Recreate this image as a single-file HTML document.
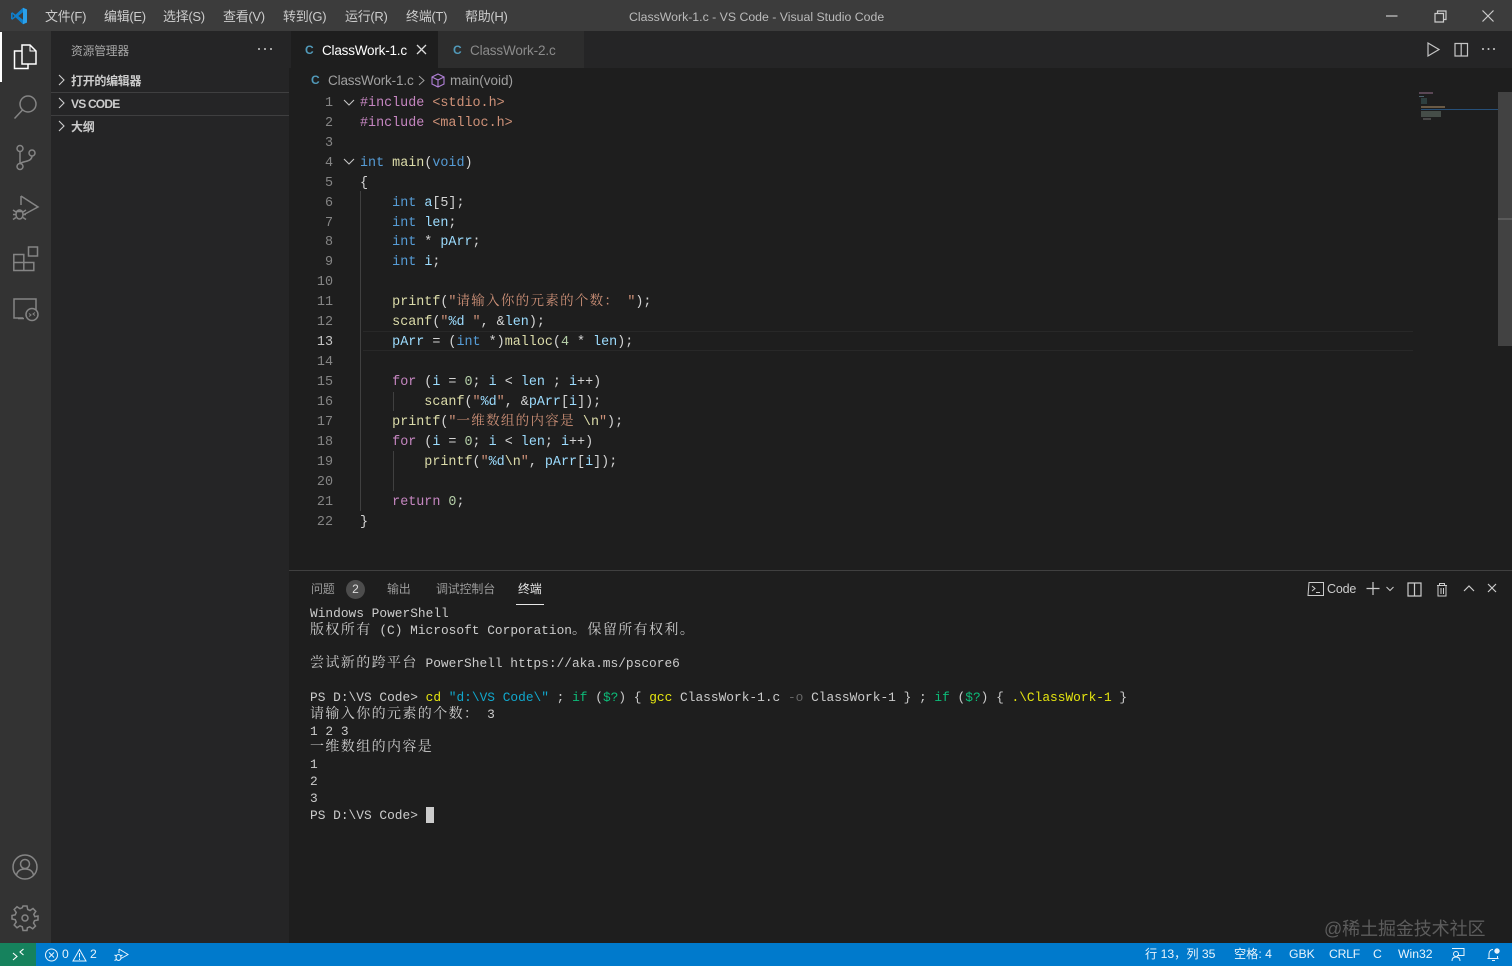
<!DOCTYPE html>
<html lang="zh"><head><meta charset="utf-8"><title>ClassWork-1.c - VS Code</title>
<style>
html,body{margin:0;padding:0;background:#1e1e1e}
#r{position:relative;width:1512px;height:966px;overflow:hidden;background:#1e1e1e;font-family:"Liberation Sans","Noto Sans CJK SC",sans-serif;color:#ccc}
.a{position:absolute;white-space:pre}
svg{position:absolute;overflow:visible;fill:none}
.m{font-size:13px;top:8px;line-height:18px;color:#ccc;letter-spacing:-.3px}
.n{left:300px;width:33px;text-align:right;font:13.4px/20px "Liberation Mono",monospace;color:#858585;margin-top:2px}
.l{left:360px;font:13.4px/20px "Liberation Mono","Noto Serif CJK SC",monospace;color:#d4d4d4;margin-top:2px}
.k{color:#569cd6}.p{color:#c586c0}.s{color:#ce9178}.f{color:#dcdcaa}.v{color:#9cdcfe}.g{color:#b5cea8}
.z{font-family:"Noto Serif CJK SC",serif;font-size:13.5px;letter-spacing:1.3px;line-height:0}
.t{left:310px;font:12.85px/17px "Liberation Mono","Noto Serif CJK SC",monospace;color:#ccc}
.z2{font-family:"Noto Serif CJK SC",serif;font-size:14px;letter-spacing:1.4px;line-height:0}
.y{color:#e5e510}.c{color:#11a8cd}.q{color:#0dbc79}.d{color:#666}
.b{font-size:12.2px;top:945px;line-height:18px;color:#e8f4fc}
.pt{font-size:12px;top:580px;line-height:18px;color:#9a9a9a;letter-spacing:-.2px}
.sh{font-size:12px;font-weight:bold;left:71px;line-height:16px;color:#ccc;letter-spacing:-.3px}
.ic{stroke:#858585;stroke-width:1.5}
</style></head><body><div id="r">

<!-- title bar -->
<div class="a" style="left:0;top:0;width:1512px;height:31px;background:#3c3c3c"></div>
<svg style="left:10px;top:7px" width="18" height="18" viewBox="0 0 18 18"><path d="M13 .8 5.600 7.600 2.400 5.200 1 6v6l1.400.8 3.200-2.400L13 17.200 17 15.500V2.500z" fill="#0f7fcb"/><path d="M13 5.300 8.300 9 13 12.700z" fill="#3c3c3c"/><path d="M2.600 7v4L4.500 9z" fill="#3c3c3c"/><path d="M13 .8 17 2.500v13L13 17.200z" fill="#2ba0ea"/></svg>
<div class="a m" style="left:45px">文件(F)</div>
<div class="a m" style="left:104px">编辑(E)</div>
<div class="a m" style="left:163px">选择(S)</div>
<div class="a m" style="left:223px">查看(V)</div>
<div class="a m" style="left:283px">转到(G)</div>
<div class="a m" style="left:345px">运行(R)</div>
<div class="a m" style="left:406px">终端(T)</div>
<div class="a m" style="left:465px">帮助(H)</div>
<div class="a" style="left:629px;top:8px;font-size:12.3px;line-height:18px;color:#bbb">ClassWork-1.c - VS Code - Visual Studio Code</div>
<svg style="left:1380px;top:8px" width="120" height="16" viewBox="0 0 120 16" stroke="#ccc" stroke-width="1.200"><path d="M6 8H17.500"/><path d="M55 5.500h8.500V14H55zM57.500 5.500V3H66v8.500H63.500"/><path d="M102.500 2.500 113.500 13.500M113.500 2.500 102.500 13.500"/></svg>

<!-- activity bar -->
<div class="a" style="left:0;top:31px;width:51px;height:912px;background:#333"></div>
<div class="a" style="left:0;top:32px;width:2px;height:50px;background:#fff"></div>
<svg style="left:13px;top:44px" width="24" height="26" viewBox="0 0 24 26" stroke="#fff" stroke-width="1.500"><path d="M9 1h8l6 6v13H9z"/><path d="M17 1v6h6" stroke-width="1"/><path d="M9 7H1.500v17.500H15V20"/></svg>
<svg style="left:13px;top:94px" width="25" height="26" viewBox="0 0 25 26" class="ic"><circle cx="15" cy="10" r="8"/><path d="M9.500 16 1.500 24.500"/></svg>
<svg style="left:14px;top:144px" width="24" height="27" viewBox="0 0 24 27" class="ic"><circle cx="6" cy="4.500" r="3"/><circle cx="6" cy="22.500" r="3"/><circle cx="18" cy="9" r="3"/><path d="M6 7.500v12M18 12c0 4-4 5-6.500 5.500S7 18.500 6 20"/></svg>
<svg style="left:12px;top:194px" width="27" height="28" viewBox="0 0 27 28" class="ic"><path d="M9 2 26 13 12 20.500M9 2v9"/><ellipse cx="7.500" cy="20.500" rx="3.500" ry="4.500"/><path d="M1 16l3 2M1 20.500h3M1 25.500l3-2M14 16l-3 2M14 20.500h-3M14 25.500l-3-2M4 17.500h7"/></svg>
<svg style="left:13px;top:246px" width="26" height="26" viewBox="0 0 26 26" class="ic"><path d="M.8 8.500h10v16H.8zM.8 16.500h20v8h-10M10.800 8.500v8"/><path d="M15.500 1h9v9h-9z"/></svg>
<svg style="left:13px;top:298px" width="26" height="26" viewBox="0 0 26 26" class="ic"><path d="M10 20H1V1h22v11M5 20.500h6"/><circle cx="19" cy="16.500" r="6"/><path d="M16 15.500l2 1.500-2 1.500M22 14.500l-2 1.500 2 1.500" stroke-width="1"/></svg>
<svg style="left:12px;top:854px" width="26" height="26" viewBox="0 0 26 26" class="ic"><circle cx="13" cy="13" r="12"/><circle cx="13" cy="10" r="4.500"/><path d="M4.500 21c1-4.500 4.500-6 8.500-6s7.500 1.500 8.500 6"/></svg>
<svg style="left:12px;top:905px" width="26" height="26" viewBox="0 0 26 26" class="ic"><path d="M11 1h4l.7 3.500 2.300 1 3-2 2.800 2.800-2 3 1 2.300L26 11v4l-3.500.7-1 2.300 2 3-2.800 2.800-3-2-2.300 1L15 25.500h-4l-.7-3.700-2.300-1-3 2L2.200 20l2-3-1-2.300L0 14v-3.500l3.200-.7 1-2.300-2-3L5 1.700l3 2 2.300-1z"/><circle cx="13" cy="13" r="3"/></svg>

<!-- sidebar -->
<div class="a" style="left:51px;top:31px;width:238px;height:912px;background:#252526"></div>
<div class="a" style="left:71px;top:43px;font-size:11.8px;line-height:16px;color:#a8a8a8;letter-spacing:-.2px">资源管理器</div>
<svg style="left:257px;top:46px" width="16" height="6"><circle cx="2" cy="3" r="1" fill="#ccc"/><circle cx="8" cy="3" r="1" fill="#ccc"/><circle cx="14" cy="3" r="1" fill="#ccc"/></svg>
<svg style="left:56px;top:72px" width="12" height="64" stroke="#ccc" stroke-width="1.100"><path d="M3 3l5 5-5 5M3 26l5 5-5 5M3 49l5 5-5 5"/></svg>
<div class="a sh" style="top:73px">打开的编辑器</div>
<div class="a" style="left:51px;top:92px;width:238px;height:1px;background:#3f3f40"></div>
<div class="a sh" style="top:96px;letter-spacing:-.8px">VS CODE</div>
<div class="a" style="left:51px;top:115px;width:238px;height:1px;background:#3f3f40"></div>
<div class="a sh" style="top:119px">大纲</div>

<!-- tabs -->
<div class="a" style="left:289px;top:31px;width:1223px;height:37px;background:#252526"></div>
<div class="a" style="left:291px;top:31px;width:147px;height:37px;background:#1e1e1e"></div>
<div class="a" style="left:438px;top:31px;width:146px;height:37px;background:#2d2d2d"></div>
<div class="a" style="left:305px;top:42px;font-size:12px;font-weight:bold;line-height:16px;color:#519aba">C</div>
<div class="a" style="left:322px;top:42px;font-size:13.5px;line-height:18px;color:#fff;letter-spacing:-.2px">ClassWork-1.c</div>
<svg style="left:416px;top:44px" width="11" height="11" stroke="#ddd" stroke-width="1.300"><path d="M1 1l9 9M10 1l-9 9"/></svg>
<div class="a" style="left:453px;top:42px;font-size:12px;font-weight:bold;line-height:16px;color:#519aba">C</div>
<div class="a" style="left:470px;top:42px;font-size:13.5px;line-height:18px;color:#8b8b8b;letter-spacing:-.15px">ClassWork-2.c</div>
<svg style="left:1426px;top:41px" width="72" height="18" stroke="#c5c5c5" stroke-width="1.200"><path d="M2 2 13 8.500 2 15z"/><path d="M29 2.500h12.500v12.500H29zM35.200 2.500v12.500"/></svg>
<svg style="left:1481px;top:46px" width="16" height="6"><circle cx="2" cy="3" r="1" fill="#ccc"/><circle cx="7.500" cy="3" r="1" fill="#ccc"/><circle cx="13" cy="3" r="1" fill="#ccc"/></svg>

<!-- breadcrumb -->
<div class="a" style="left:311px;top:72px;font-size:12px;font-weight:bold;line-height:16px;color:#519aba">C</div>
<div class="a" style="left:328px;top:72px;font-size:13.5px;line-height:18px;color:#a0a0a0;letter-spacing:-.15px">ClassWork-1.c</div>
<svg style="left:418px;top:75px" width="8" height="11" stroke="#a0a0a0" stroke-width="1"><path d="M1 1l5 4.500-5 4.500"/></svg>
<svg style="left:431px;top:73px" width="14" height="15" stroke="#b180d7" stroke-width="1.100"><path d="M7 1 13 4v7L7 14 1 11V4zM1 4l6 3 6-3M7 7v7"/></svg>
<div class="a" style="left:450px;top:72px;font-size:13.5px;line-height:18px;color:#a0a0a0;letter-spacing:0">main(void)</div>

<!-- line numbers -->
<div class="a n" style="top:92px">1</div><div class="a n" style="top:112px">2</div><div class="a n" style="top:132px">3</div><div class="a n" style="top:152px">4</div><div class="a n" style="top:172px">5</div><div class="a n" style="top:192px">6</div><div class="a n" style="top:212px">7</div><div class="a n" style="top:231px">8</div><div class="a n" style="top:251px">9</div><div class="a n" style="top:271px">10</div><div class="a n" style="top:291px">11</div><div class="a n" style="top:311px">12</div><div class="a n" style="top:331px;color:#c6c6c6">13</div><div class="a n" style="top:351px">14</div><div class="a n" style="top:371px">15</div><div class="a n" style="top:391px">16</div><div class="a n" style="top:411px">17</div><div class="a n" style="top:431px">18</div><div class="a n" style="top:451px">19</div><div class="a n" style="top:471px">20</div><div class="a n" style="top:491px">21</div><div class="a n" style="top:511px">22</div>
<svg style="left:343px;top:98px" width="12" height="70" stroke="#c5c5c5" stroke-width="1.100"><path d="M1 2l5 5 5-5M1 61l5 5 5-5"/></svg>

<!-- guides and current line -->
<div class="a" style="left:360px;top:191px;width:1px;height:320px;background:#404040"></div>
<div class="a" style="left:393px;top:392px;width:1px;height:19px;background:#404040"></div>
<div class="a" style="left:393px;top:451px;width:1px;height:40px;background:#404040"></div>
<div class="a" style="left:363px;top:331px;width:1050px;height:18px;border:1px solid #282828;border-left:0;border-right:0"></div>

<!-- code -->
<div class="a l" style="top:92px"><span class="p">#include</span> <span class="s">&lt;stdio.h&gt;</span></div>
<div class="a l" style="top:112px"><span class="p">#include</span> <span class="s">&lt;malloc.h&gt;</span></div>
<div class="a l" style="top:152px"><span class="k">int</span> <span class="f">main</span>(<span class="k">void</span>)</div>
<div class="a l" style="top:172px">{</div>
<div class="a l" style="top:192px">    <span class="k">int</span> <span class="v">a</span>[5];</div>
<div class="a l" style="top:212px">    <span class="k">int</span> <span class="v">len</span>;</div>
<div class="a l" style="top:231px">    <span class="k">int</span> * <span class="v">pArr</span>;</div>
<div class="a l" style="top:251px">    <span class="k">int</span> <span class="v">i</span>;</div>
<div class="a l" style="top:291px">    <span class="f">printf</span>(<span class="s">"<span class="z">请输入你的元素的个数：</span> "</span>);</div>
<div class="a l" style="top:311px">    <span class="f">scanf</span>(<span class="s">"</span><span class="v">%d</span><span class="s"> "</span>, &amp;<span class="v">len</span>);</div>
<div class="a l" style="top:331px">    <span class="v">pArr</span> = (<span class="k">int</span> *)<span class="f">malloc</span>(<span class="g">4</span> * <span class="v">len</span>);</div>
<div class="a l" style="top:371px">    <span class="p">for</span> (<span class="v">i</span> = <span class="g">0</span>; <span class="v">i</span> &lt; <span class="v">len</span> ; <span class="v">i</span>++)</div>
<div class="a l" style="top:391px">        <span class="f">scanf</span>(<span class="s">"</span><span class="v">%d</span><span class="s">"</span>, &amp;<span class="v">pArr</span>[<span class="v">i</span>]);</div>
<div class="a l" style="top:411px">    <span class="f">printf</span>(<span class="s">"<span class="z">一维数组的内容是</span> <span class="f">\n</span>"</span>);</div>
<div class="a l" style="top:431px">    <span class="p">for</span> (<span class="v">i</span> = <span class="g">0</span>; <span class="v">i</span> &lt; <span class="v">len</span>; <span class="v">i</span>++)</div>
<div class="a l" style="top:451px">        <span class="f">printf</span>(<span class="s">"</span><span class="v">%d</span><span class="f">\n</span><span class="s">"</span>, <span class="v">pArr</span>[<span class="v">i</span>]);</div>
<div class="a l" style="top:491px">    <span class="p">return</span> <span class="g">0</span>;</div>
<div class="a l" style="top:511px">}</div>

<!-- minimap -->
<div class="a" style="left:1419px;top:92px;width:14px;height:2px;background:#5a4755"></div>
<div class="a" style="left:1419px;top:96px;width:5px;height:1px;background:#4d6470"></div>
<div class="a" style="left:1421px;top:98px;width:6px;height:6px;background:#2e3f3f"></div>
<div class="a" style="left:1421px;top:106px;width:24px;height:2px;background:#6a5a45"></div>
<div class="a" style="left:1421px;top:109px;width:77px;height:1px;background:#264f78"></div>
<div class="a" style="left:1421px;top:111px;width:20px;height:6px;background:#454d48"></div>
<div class="a" style="left:1423px;top:118px;width:8px;height:2px;background:#484848"></div>
<!-- scrollbar -->
<div class="a" style="left:1498px;top:92px;width:14px;height:254px;background:#424242"></div>
<div class="a" style="left:1498px;top:218px;width:14px;height:2px;background:#5a5a5a"></div>

<!-- panel -->
<div class="a" style="left:289px;top:570px;width:1223px;height:373px;background:#1e1e1e;border-top:1px solid #404040;box-sizing:border-box"></div>
<div class="a pt" style="left:311px">问题</div>
<div class="a" style="left:346px;top:580px;width:19px;height:19px;border-radius:50%;background:#4d4d4d;color:#ddd;font-size:12px;line-height:19px;text-align:center">2</div>
<div class="a pt" style="left:387px">输出</div>
<div class="a pt" style="left:436px">调试控制台</div>
<div class="a pt" style="left:518px;color:#e7e7e7">终端</div>
<div class="a" style="left:516px;top:604px;width:28px;height:1px;background:#e7e7e7"></div>
<svg style="left:1307px;top:581px" width="18" height="16" stroke="#ccc" stroke-width="1"><path d="M2 1.500h14.500v13H1zM5 5l3 2.500-3 2.500M9 11.500h4"/></svg>
<div class="a" style="left:1327px;top:580px;font-size:12.5px;line-height:18px;color:#ccc;letter-spacing:-.2px">Code</div>
<svg style="left:1366px;top:581px" width="130" height="16" stroke="#ccc" stroke-width="1.200"><path d="M7 1v13M.5 7.500h13"/><path d="M20.500 6l3.500 3.500L27.500 6" stroke-width="1"/><path d="M42 2h13v13H42zM48.500 2v13"/><path d="M71 4.500h10M73.500 4.500V2.500h5v2M72 4.500V15h8V4.500M75 7v6M77.500 7v6" stroke-width="1"/><path d="M98 10l5-5 5 5"/><path d="M122 3l8 8M130 3l-8 8"/></svg>

<!-- terminal -->
<div class="a t" style="top:605px">Windows PowerShell</div>
<div class="a t" style="top:622px"><span class="z2">版权所有</span> (C) Microsoft Corporation<span class="z2">。保留所有权利。</span></div>
<div class="a t" style="top:655px"><span class="z2">尝试新的跨平台</span> PowerShell https://aka.ms/pscore6</div>
<div class="a t" style="top:689px">PS D:\VS Code&gt; <span class="y">cd</span> <span class="c">"d:\VS Code\"</span> ; <span class="q">if</span> (<span class="q">$?</span>) { <span class="y">gcc</span> ClassWork-1.c <span class="d">-o</span> ClassWork-1 } ; <span class="q">if</span> (<span class="q">$?</span>) { <span class="y">.\ClassWork-1</span> }</div>
<div class="a t" style="top:706px"><span class="z2">请输入你的元素的个数：</span> 3</div>
<div class="a t" style="top:723px">1 2 3</div>
<div class="a t" style="top:739px"><span class="z2">一维数组的内容是</span></div>
<div class="a t" style="top:756px">1</div>
<div class="a t" style="top:773px">2</div>
<div class="a t" style="top:790px">3</div>
<div class="a t" style="top:807px">PS D:\VS Code&gt;</div>
<div class="a" style="left:426px;top:807px;width:8px;height:16px;background:#ccc"></div>
<div class="a" style="left:1324px;top:917px;font-size:18px;line-height:24px;color:#5c5c5c;letter-spacing:-.1px">@稀土掘金技术社区</div>

<!-- status bar -->
<div class="a" style="left:0;top:943px;width:1512px;height:23px;background:#007acc"></div>
<div class="a" style="left:0;top:943px;width:36px;height:23px;background:#16825d"></div>
<svg style="left:12px;top:948px" width="13" height="13" stroke="#fff" stroke-width="1.100"><path d="M1 5l4 3.500-4 3.500M11.500 1 8 4l3.500 3"/></svg>
<svg style="left:45px;top:948px" width="70" height="14" stroke="#e8f4fc" stroke-width="1"><circle cx="6.500" cy="7" r="6"/><path d="M4 4.500l5 5M9 4.500l-5 5"/><path d="M34.500 1.500 41 13H28zM34.500 5v4.500M34.500 10.500v1.500"/></svg>
<div class="a b" style="left:62px">0</div>
<div class="a b" style="left:90px">2</div>
<svg style="left:114px;top:948px" width="15" height="14" stroke="#e8f4fc" stroke-width="1"><path d="M5 1 14 6.500 7 10.500"/><path d="M5 1v4"/><ellipse cx="4.500" cy="9.500" rx="2.500" ry="3"/><path d="M.5 7l2 1M.5 12.500l2-1M8.500 7l-2 1"/></svg>
<div class="a b" style="left:1145px">行 13，列 35</div>
<div class="a b" style="left:1234px">空格: 4</div>
<div class="a b" style="left:1289px">GBK</div>
<div class="a b" style="left:1329px;letter-spacing:-.2px">CRLF</div>
<div class="a b" style="left:1373px">C</div>
<div class="a b" style="left:1398px">Win32</div>
<svg style="left:1451px;top:947px" width="50" height="15" stroke="#e8f4fc" stroke-width="1"><path d="M1 1.500h12v7H6"/><circle cx="5" cy="7" r="2.500"/><path d="M1 14c0-3 2-4 4-4s4 1 4 4"/><path d="M38 11.500V7c0-2.500 1.500-4.500 4-4.500M38 11.500h9.500M36.500 11.500h2M41 13.500h3M46.500 9v2"/><circle cx="46" cy="4" r="2.200" fill="#e8f4fc"/></svg>
</div></body></html>
